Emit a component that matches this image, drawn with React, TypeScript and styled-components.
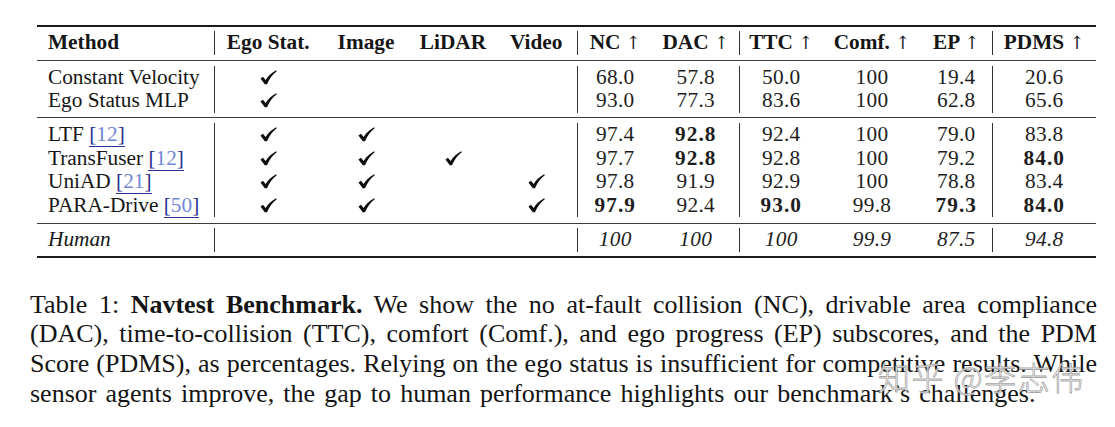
import React from 'react';
import styled, { createGlobalStyle } from 'styled-components';

const GlobalStyle = createGlobalStyle`
  html, body {
    margin: 0;
    padding: 0;
    background: #ffffff;
  }
  body {
    font-family: "Liberation Serif", "Times New Roman", serif;
    color: #161616;
  }
`;

const Page = styled.div`
  position: relative;
  width: 1115px;
  height: 427px;
  padding-top: 25px;
  box-sizing: border-box;
  background: #fff;
`;

const Table = styled.table`
  margin-left: 37px;
  width: 1059px;
  table-layout: fixed;
  border-collapse: collapse;
  border-top: 2px solid #1c1c1c;
  border-bottom: 2px solid #1c1c1c;
  font-size: 21.3px;
`;

const Group = styled.tbody<{ $rule?: boolean }>`
  border-top: ${(p) => (p.$rule ? '1px solid #3a3a3a' : 'none')};
`;

const Gap = styled.tr<{ $h: number }>`
  height: ${(p) => p.$h}px;
  td {
    padding: 0;
    border: none;
    line-height: 0;
    font-size: 0;
  }
`;

const Row = styled.tr`
  height: 23.5px;
`;

const Cell = styled.td<{ $sep?: boolean; $left?: boolean }>`
  padding: 0;
  padding-left: ${(p) => (p.$left ? '11px' : '0')};
  text-align: ${(p) => (p.$left ? 'left' : 'center')};
  line-height: 23.5px;
  white-space: nowrap;
  border-left: ${(p) => (p.$sep ? '1px solid #333' : 'none')};
`;

const HeadCell = styled(Cell)`
  font-weight: bold;
`;

const Arrow = styled.span`
  font-family: "DejaVu Serif", serif;
  font-weight: normal;
  font-size: 18px;
  color: #222;
`;

const Num = styled.span<{ $bold?: boolean; $italic?: boolean }>`
  font-weight: ${(p) => (p.$bold ? 'bold' : 'normal')};
  font-style: ${(p) => (p.$italic ? 'italic' : 'normal')};
  letter-spacing: ${(p) => (p.$bold ? '1px' : '0.3px')};
  color: #1e1e1e;
`;

const CheckMark = styled.svg`
  width: 17px;
  height: 15px;
  vertical-align: -1px;
`;

const Cite = styled.span`
  color: #2b3190;
  border-bottom: 1.5px solid #2b3190;
  line-height: 1;
`;

const CiteNum = styled.span`
  color: #7088d6;
`;

const Caption = styled.div`
  margin: 32px 0 0 30px;
  width: 1067px;
  font-size: 26px;
  line-height: 29.7px;
  color: #141414;
`;

const Line = styled.div<{ $last?: boolean }>`
  text-align: justify;
  text-align-last: ${(p) => (p.$last ? 'left' : 'justify')};
  word-spacing: ${(p) => (p.$last ? '2.6px' : '0')};
  white-space: nowrap;
`;

const Watermark = styled.div`
  position: absolute;
  left: 878px;
  top: 353px;
  font-family: "Noto Sans CJK SC", sans-serif;
  font-weight: 300;
  font-size: 32px;
  letter-spacing: 1.5px;
  color: rgba(255, 255, 255, 0.92);
  -webkit-text-stroke: 0.8px rgba(140, 140, 140, 0.8);
  white-space: pre;
`;

type Val = { v: string; b?: boolean };

type Method = {
  name: string;
  cite?: string;
  checks: [boolean, boolean, boolean, boolean];
  vals: Val[];
};

const groupA: Method[] = [
  {
    name: 'Constant Velocity',
    checks: [true, false, false, false],
    vals: [{ v: '68.0' }, { v: '57.8' }, { v: '50.0' }, { v: '100' }, { v: '19.4' }, { v: '20.6' }],
  },
  {
    name: 'Ego Status MLP',
    checks: [true, false, false, false],
    vals: [{ v: '93.0' }, { v: '77.3' }, { v: '83.6' }, { v: '100' }, { v: '62.8' }, { v: '65.6' }],
  },
];

const groupB: Method[] = [
  {
    name: 'LTF',
    cite: '12',
    checks: [true, true, false, false],
    vals: [{ v: '97.4' }, { v: '92.8', b: true }, { v: '92.4' }, { v: '100' }, { v: '79.0' }, { v: '83.8' }],
  },
  {
    name: 'TransFuser',
    cite: '12',
    checks: [true, true, true, false],
    vals: [{ v: '97.7' }, { v: '92.8', b: true }, { v: '92.8' }, { v: '100' }, { v: '79.2' }, { v: '84.0', b: true }],
  },
  {
    name: 'UniAD',
    cite: '21',
    checks: [true, true, false, true],
    vals: [{ v: '97.8' }, { v: '91.9' }, { v: '92.9' }, { v: '100' }, { v: '78.8' }, { v: '83.4' }],
  },
  {
    name: 'PARA-Drive',
    cite: '50',
    checks: [true, true, false, true],
    vals: [{ v: '97.9', b: true }, { v: '92.4' }, { v: '93.0', b: true }, { v: '99.8' }, { v: '79.3', b: true }, { v: '84.0', b: true }],
  },
];

const human = ['100', '100', '100', '99.9', '87.5', '94.8'];

// separators sit before the first input column, NC, TTC and PDMS
const valSep = [true, false, true, false, false, true];
const widths = [177, 108, 88, 86, 81, 76, 86, 84, 98, 71, 104];

const Check: React.FC = () => (
  <CheckMark viewBox="0 0 16 14">
    <path
      d="M0.4 8.0 L2.8 6.2 L5.3 9.4 C7.7 5.6 10.9 2.4 15.3 0.2 L15.8 1.2 C11.8 4.0 8.9 8.2 6.6 13.4 L4.5 13.4 Z"
      fill="#0e0e0e"
    />
  </CheckMark>
);

const Spacer: React.FC<{ h: number }> = ({ h }) => (
  <Gap $h={h}>
    <td colSpan={11} />
  </Gap>
);

const MethodRow: React.FC<{ m: Method }> = ({ m }) => (
  <Row>
    <Cell $left>
      {m.name}
      {m.cite && (
        <>
          {' '}
          <Cite>
            [<CiteNum>{m.cite}</CiteNum>]
          </Cite>
        </>
      )}
    </Cell>
    {m.checks.map((c, i) => (
      <Cell key={i} $sep={i === 0}>
        {c && <Check />}
      </Cell>
    ))}
    {m.vals.map((val, i) => (
      <Cell key={i} $sep={valSep[i]}>
        <Num $bold={val.b}>{val.v}</Num>
      </Cell>
    ))}
  </Row>
);

const App: React.FC = () => {
  return (
    <Page>
      <GlobalStyle />
      <Table>
        <colgroup>
          {widths.map((w, i) => (
            <col key={i} style={{ width: w }} />
          ))}
        </colgroup>
        <Group>
          <Spacer h={5} />
          <Row>
            <HeadCell $left>Method</HeadCell>
            <HeadCell $sep>Ego Stat.</HeadCell>
            <HeadCell>Image</HeadCell>
            <HeadCell>LiDAR</HeadCell>
            <HeadCell>Video</HeadCell>
            <HeadCell $sep>NC <Arrow>↑</Arrow></HeadCell>
            <HeadCell>DAC <Arrow>↑</Arrow></HeadCell>
            <HeadCell $sep>TTC <Arrow>↑</Arrow></HeadCell>
            <HeadCell>Comf. <Arrow>↑</Arrow></HeadCell>
            <HeadCell>EP <Arrow>↑</Arrow></HeadCell>
            <HeadCell $sep>PDMS <Arrow>↑</Arrow></HeadCell>
          </Row>
          <Spacer h={6} />
        </Group>
        <Group $rule>
          <Spacer h={5} />
          {groupA.map((m) => (
            <MethodRow key={m.name} m={m} />
          ))}
          <Spacer h={4.5} />
        </Group>
        <Group $rule>
          <Spacer h={6} />
          {groupB.map((m) => (
            <MethodRow key={m.name} m={m} />
          ))}
          <Spacer h={6} />
        </Group>
        <Group $rule>
          <Spacer h={5} />
          <Row>
            <Cell $left>
              <i>Human</i>
            </Cell>
            <Cell $sep />
            <Cell />
            <Cell />
            <Cell />
            {human.map((v, i) => (
              <Cell key={i} $sep={valSep[i]}>
                <Num $italic>{v}</Num>
              </Cell>
            ))}
          </Row>
          <Spacer h={5} />
        </Group>
      </Table>

      <Caption>
        <Line>
          Table 1: <b>Navtest Benchmark.</b> We show the no at-fault collision (NC), drivable area compliance
        </Line>
        <Line>
          (DAC), time-to-collision (TTC), comfort (Comf.), and ego progress (EP) subscores, and the PDM
        </Line>
        <Line>
          Score (PDMS), as percentages. Relying on the ego status is insufficient for competitive results. While
        </Line>
        <Line $last>
          sensor agents improve, the gap to human performance highlights our benchmark’s challenges.
        </Line>
      </Caption>

      <Watermark>知乎 @李志伟</Watermark>
    </Page>
  );
};

export default App;
